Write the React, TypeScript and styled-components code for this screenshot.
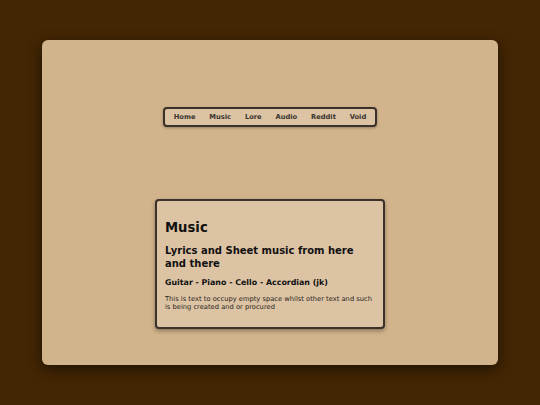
import React from "react";
import styled, { createGlobalStyle } from "styled-components";

const GlobalStyle = createGlobalStyle`
  html, body {
    margin: 0;
    padding: 0;
    background: #432604;
  }
  body {
    font-family: "DejaVu Sans", Verdana, sans-serif;
    font-size: 6.72px;
  }
`;

const Page = styled.div`
  width: 540px;
  height: 405px;
  padding: 40px 42px;
  box-sizing: border-box;
`;

const Panel = styled.main`
  height: 325px;
  background: #d2b48c;
  border-radius: 6px;
  box-shadow: 0 4px 14px rgba(0, 0, 0, 0.55);
  display: flex;
  flex-direction: column;
  align-items: center;
  padding-top: 67px;
  box-sizing: border-box;
`;

const Nav = styled.nav`
  display: flex;
  gap: 13.8px;
  padding: 0 9px;
  height: 20px;
  box-sizing: border-box;
  align-items: center;
  background: #dcc3a3;
  border: 2px solid #3b3128;
  border-radius: 4px;
  box-shadow: 0 1px 3px rgba(0, 0, 0, 0.3);
`;

const NavLink = styled.a`
  font-family: "DejaVu Sans", Verdana, sans-serif;
  font-weight: bold;
  font-size: 6.72px;
  color: #3a3530;
  text-decoration: none;
`;

const Card = styled.section`
  margin-top: 72px;
  width: 230px;
  box-sizing: border-box;
  padding: 0 8px;
  background: #dcc3a4;
  border: 2px solid #3b3128;
  border-radius: 4px;
  box-shadow: 0 2px 4px rgba(0, 0, 0, 0.35);
  color: #111;
  display: flow-root;
`;

const Title = styled.h1`
  font-size: 13.2px;
  margin: 18.7px 0 0;
`;

const Subtitle = styled.h2`
  font-size: 10px;
  line-height: 13px;
  margin: 9px 0 0;
`;

const Instruments = styled.h3`
  font-size: 7.9px;
  margin: 8.7px 0 0;
`;

const Blurb = styled.p`
  font-size: 6.72px;
  margin: 7.8px 0 15.6px;
  color: #2a2520;
`;

const links = ["Home", "Music", "Lore", "Audio", "Reddit", "Void"];

const App: React.FC = () => (
  <>
    <GlobalStyle />
    <Page>
      <Panel>
        <Nav>
          {links.map((l) => (
            <NavLink key={l} href="#">
              {l}
            </NavLink>
          ))}
        </Nav>
        <Card>
          <Title>Music</Title>
          <Subtitle>Lyrics and Sheet music from here and there</Subtitle>
          <Instruments>Guitar - Piano - Cello - Accordian (jk)</Instruments>
          <Blurb>
            This is text to occupy empty space whilst other text and such is
            being created and or procured
          </Blurb>
        </Card>
      </Panel>
    </Page>
  </>
);

export default App;
